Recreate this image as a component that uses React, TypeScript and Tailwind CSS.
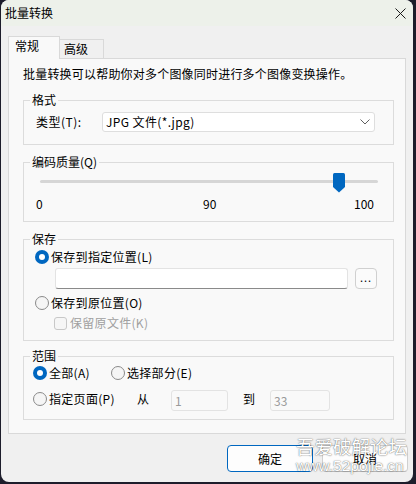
import React from "react";

const font = { fontFamily: '"Noto Sans CJK SC", "Noto Sans", sans-serif' };

function Radio({ checked }: { checked?: boolean }) {
  if (checked) {
    return (
      <span className="flex w-[14px] h-[14px] shrink-0 items-center justify-center rounded-full bg-[#0067c0]">
        <span className="w-[6px] h-[6px] rounded-full bg-white" />
      </span>
    );
  }
  return <span className="block w-[14px] h-[14px] shrink-0 rounded-full border border-[#8a8a8a] bg-[#f5f5f5]" />;
}

function Group({ title, className, children }: { title: string; className?: string; children: React.ReactNode }) {
  return (
    <fieldset className={"ml-[14px] w-[371px] border border-[#dcdcdc] " + (className ?? "")}>
      <legend className="ml-[6px] px-[2px] h-[16px] leading-[16px] text-[12px] text-black">{title}</legend>
      {children}
    </fieldset>
  );
}

export default function App() {
  return (
    <div className="w-[416px] h-[484px] bg-[#1d1d2b] pl-px overflow-hidden" style={font}>
      <div className="relative w-[412px] h-[482px] rounded-[8px] bg-[#f0f0f0] overflow-hidden flex flex-col text-[12px] leading-[16px] text-black">
        {/* title bar */}
        <div className="h-[26px] shrink-0 bg-[#edf1ea] flex items-center justify-between pl-[4px] pr-[7px]">
          <span className="text-[12px] leading-[16px]">批量转换</span>
          <svg width="11" height="11" viewBox="0 0 11 11">
            <path d="M0.5 0.5 L10.5 10.5 M10.5 0.5 L0.5 10.5" stroke="#1a1a1a" strokeWidth="1" />
          </svg>
        </div>

        {/* body */}
        <div className="px-[7px] pt-[10px] flex flex-col">
          {/* tabs */}
          <div className="flex items-end h-[22px]">
            <div className="relative z-10 -mb-px h-[23px] w-[52px] bg-[#f9f9f9] border border-b-0 border-[#d9d9d9] pl-[6px] pt-[1px]">
              常规
            </div>
            <div className="h-[19px] w-[44px] bg-[#f0f0f0] border border-l-0 border-b-0 border-[#d9d9d9] pl-[4px] pt-[1px]">
              高级
            </div>
          </div>

          {/* panel */}
          <div className="h-[376px] border border-[#d9d9d9] bg-[#f9f9f9] pt-[7px] flex flex-col">
            <div className="pl-[14px] h-[16px] tracking-[0.2px]">批量转换可以帮助你对多个图像同时进行多个图像变换操作。</div>

            {/* 格式 */}
            <Group title="格式" className="mt-[10px] pb-[12px]">
              <div className="mt-[4px] flex items-center">
                <span className="ml-[12px] w-[66px] tracking-[0.5px]">类型(T):</span>
                <div className="w-[273px] h-[20px] bg-white border border-[#dedede] rounded-[3px] flex items-center justify-between pl-[3px] pr-[4px]">
                  <span className="tracking-[0.4px]">JPG 文件(*.jpg)</span>
                  <svg width="10" height="6" viewBox="0 0 10 6">
                    <path d="M0.5 0.5 L5 5 L9.5 0.5" fill="none" stroke="#606060" strokeWidth="1" />
                  </svg>
                </div>
              </div>
            </Group>

            {/* 编码质量 */}
            <Group title="编码质量(Q)" className="mt-[9px] pb-[9px]">
              <div className="mt-[3px] ml-[16px] w-[338px] h-[20px] relative">
                <div className="absolute left-0 right-0 top-[7px] h-[3px] rounded-full bg-[#d6d6d6]" />
                <svg className="absolute left-[293px] top-0" width="12" height="20" viewBox="0 0 12 20">
                  <path d="M1.5 0 H10.5 Q12 0 12 1.5 V14 L6 19.5 L0 14 V1.5 Q0 0 1.5 0 Z" fill="#0067c0" />
                </svg>
              </div>
              <div className="mt-[3px] flex h-[16px]">
                <span className="ml-[12px] w-[167px]">0</span>
                <span className="w-[151px]">90</span>
                <span>100</span>
              </div>
            </Group>

            {/* 保存 */}
            <Group title="保存" className="mt-[9px] pb-[9px]">
              <div className="mt-[2px] ml-[11px] flex items-center gap-[2px] h-[16px]">
                <Radio checked />
                <span className="tracking-[0.3px]">保存到指定位置(L)</span>
              </div>
              <div className="mt-[3px] ml-[31px] flex items-center gap-[7px]">
                <div className="w-[293px] h-[21px] bg-white border border-[#e3e3e3] border-b-[#8a8a8a] rounded-[3px]" />
                <div className="w-[22px] h-[21px] border border-[#d0d0d0] rounded-[4px] bg-[#fbfbfb] flex items-center justify-center text-[11px] leading-none pb-[2px] tracking-[1px]">
                  ...
                </div>
              </div>
              <div className="mt-[6px] ml-[11px] flex items-center gap-[2px] h-[16px]">
                <Radio />
                <span className="tracking-[0.3px]">保存到原位置(O)</span>
              </div>
              <div className="mt-[4px] ml-[30px] flex items-center gap-[3px] h-[16px] text-[#a0a0a0]">
                <span className="block w-[13px] h-[13px] rounded-[3px] border border-[#c8c8c8] bg-[#f6f6f6]" />
                <span className="tracking-[0.3px]">保留原文件(K)</span>
              </div>
            </Group>

            {/* 范围 */}
            <Group title="范围" className="mt-[7px] pb-[8px]">
              <div className="mt-[1px] ml-[9px] flex items-center h-[16px]">
                <div className="w-[78px] flex items-center gap-[2px]">
                  <Radio checked />
                  <span className="tracking-[0.3px]">全部(A)</span>
                </div>
                <div className="flex items-center gap-[2px]">
                  <Radio />
                  <span className="tracking-[0.3px]">选择部分(E)</span>
                </div>
              </div>
              <div className="mt-[9px] ml-[9px] flex items-center h-[21px]">
                <div className="w-[104px] flex items-center gap-[2px] -mt-[3px]">
                  <Radio />
                  <span className="tracking-[0.3px]">指定页面(P)</span>
                </div>
                <span className="w-[34px] -mt-[3px]">从</span>
                <div className="w-[57px] h-[21px] border border-[#e3e3e3] rounded-[3px] bg-[#f9f9f9] text-[#9a9a9a] pl-[3px] flex items-center">1</div>
                <span className="ml-[15px] w-[27px] -mt-[3px]">到</span>
                <div className="w-[60px] h-[21px] border border-[#e3e3e3] rounded-[3px] bg-[#f9f9f9] text-[#9a9a9a] pl-[3px] flex items-center">33</div>
              </div>
            </Group>
          </div>
        </div>

        {/* buttons */}
        <div className="mt-[11px] flex justify-end gap-[9px] pr-[5px]">
          <div className="w-[86px] h-[27px] rounded-[4px] border border-[#0067c0] bg-[#fdfdfd] flex items-center justify-center">确定</div>
          <div className="w-[86px] h-[27px] rounded-[4px] border border-[#d0d0d0] border-b-[#b8b8b8] bg-[#fdfdfd] flex items-center justify-center">取消</div>
        </div>

        {/* watermark */}
        <div className="absolute left-[295px] top-[435px] flex flex-col items-start text-white [text-shadow:0_0_1px_rgba(0,0,0,0.6),0_0_2px_rgba(0,0,0,0.3)] pointer-events-none">
          <span className="text-[18.5px] leading-[22px]">吾爱破解论坛</span>
          <span className="text-[15.5px] leading-[18px]" style={{ fontFamily: '"Liberation Sans", sans-serif' }}>www.52pojie.cn</span>
        </div>
      </div>
    </div>
  );
}
